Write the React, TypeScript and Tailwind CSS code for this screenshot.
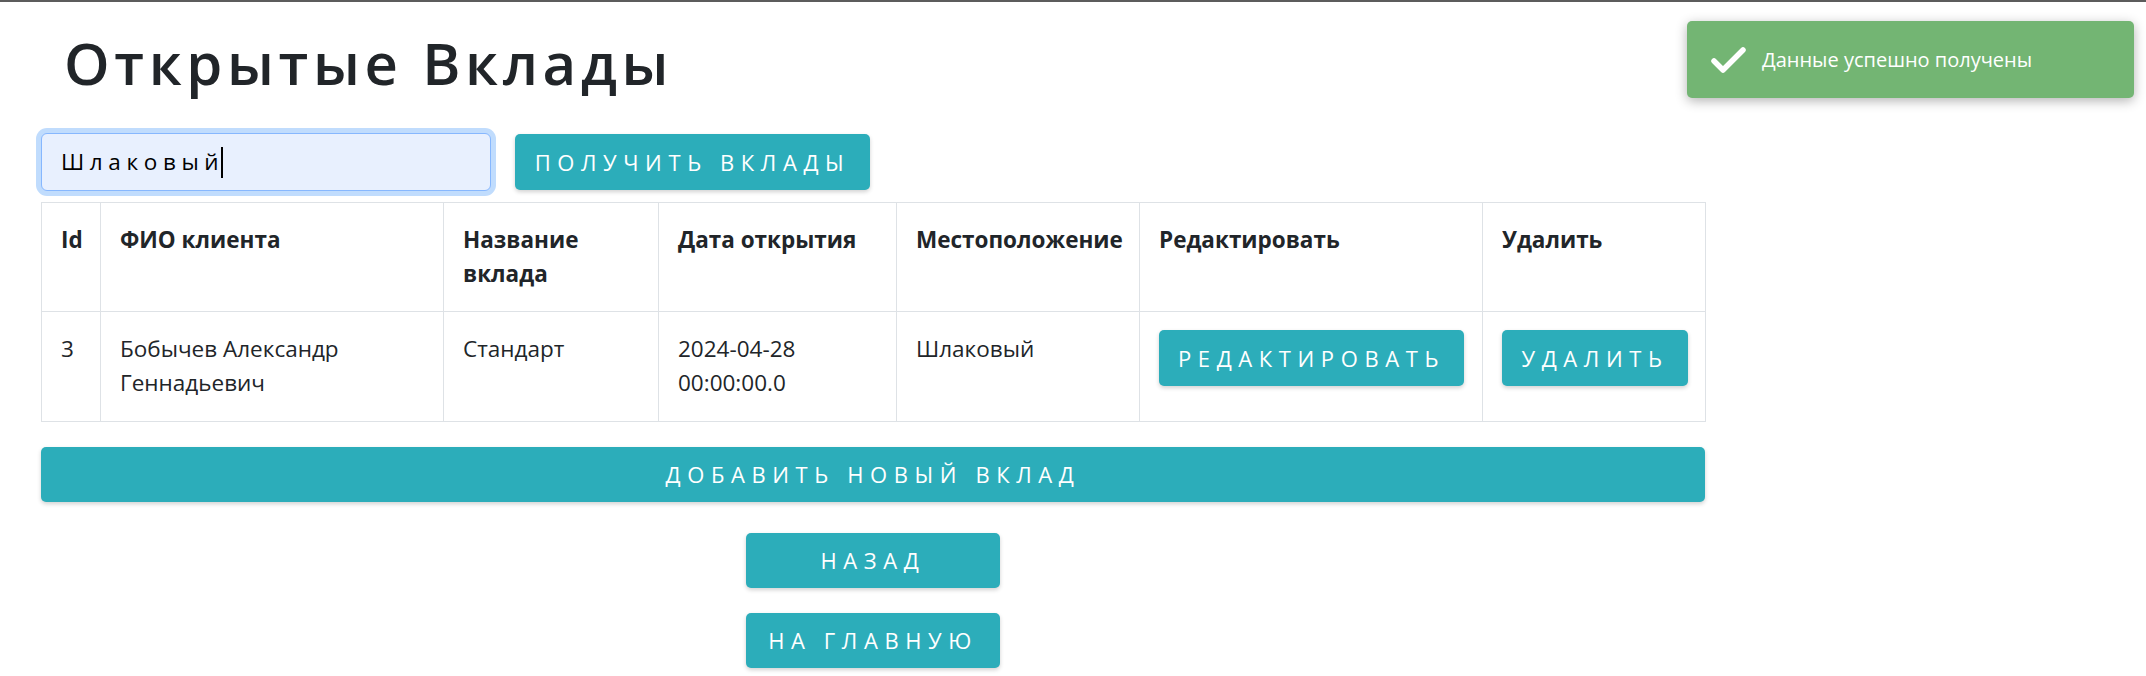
import React from "react";

const btn =
  "bg-[#2cadba] text-white uppercase rounded-[5px] shadow-[0_2px_4px_rgba(0,0,0,0.18)] flex items-center justify-center tracking-[0.3em] text-[22px]";

const th = "border border-[#dee2e6] px-[19px] pt-[20px] pb-[20px] font-bold";
const td = "border border-[#dee2e6] px-[19px] pt-[20px] pb-[21px]";

export default function App() {
  return (
    <div className="relative w-full min-h-[676px] bg-white text-[#212529] font-['Open_Sans',sans-serif]">
      <div className="h-[2px] bg-[#5c5c5c]" />
      <div className="px-[41px] w-[1746px]">
        <h1 className="mt-[26px] pl-[23px] text-[58px] leading-[70px] font-semibold tracking-[0.08em]">
          Открытые Вклады
        </h1>
        <div className="mt-[35px] flex items-start">
          <div className="w-[450px] h-[58px] rounded-[6px] border border-[#86b7fe] bg-[#e8f0fe] shadow-[0_0_0_5px_#c0dcfd] flex items-center pl-[19px] text-[22.5px] tracking-[0.25em] text-black">
            <span>Шлаковый</span>
            <span className="inline-block w-[2px] h-[31px] bg-black ml-[-3px]" />
          </div>
          <button className={`${btn} ml-[24px] w-[355px] h-[56px] mt-[1px]`}>
            Получить вклады
          </button>
        </div>
        <table className="mt-[11px] w-[1664px] table-fixed border-collapse text-[22.5px] leading-[34px]">
          <thead>
            <tr className="text-left align-top">
              <th className={`w-[59px] ${th}`}>Id</th>
              <th className={`w-[343px] ${th}`}>ФИО клиента</th>
              <th className={`w-[215px] ${th}`}>Название вклада</th>
              <th className={`w-[238px] ${th}`}>Дата открытия</th>
              <th className={`w-[243px] ${th}`}>Местоположение</th>
              <th className={`w-[343px] ${th}`}>Редактировать</th>
              <th className={`w-[223px] ${th}`}>Удалить</th>
            </tr>
          </thead>
          <tbody>
            <tr className="align-top">
              <td className={td}>3</td>
              <td className={td}>Бобычев Александр Геннадьевич</td>
              <td className={td}>Стандарт</td>
              <td className={td}>2024-04-28 00:00:00.0</td>
              <td className={td}>Шлаковый</td>
              <td className="border border-[#dee2e6] px-[19px] pt-[18px]">
                <button className={`${btn} w-[305px] h-[56px]`}>Редактировать</button>
              </td>
              <td className="border border-[#dee2e6] px-[19px] pt-[18px]">
                <button className={`${btn} w-[186px] h-[56px]`}>Удалить</button>
              </td>
            </tr>
          </tbody>
        </table>
        <button className={`${btn} mt-[25px] w-[1664px] h-[55px]`}>Добавить новый вклад</button>
        <div className="flex flex-col items-center w-[1664px]">
          <button className={`${btn} mt-[31px] w-[254px] h-[55px]`}>Назад</button>
          <button className={`${btn} mt-[25px] w-[254px] h-[55px]`}>На главную</button>
        </div>
      </div>
      <div className="absolute top-[21px] right-[12px] w-[447px] h-[77px] rounded-[5px] bg-[#73b573] shadow-[0_3px_12px_rgba(0,0,0,0.3)] flex items-center pl-[23px] text-white text-[20px]">
        <svg width="38" height="30" viewBox="0 0 38 30" className="shrink-0">
          <path d="M4 16 L13 25 L33 5" fill="none" stroke="white" strokeWidth="5.5" strokeLinecap="round" strokeLinejoin="round" />
        </svg>
        <span className="ml-[14px]">Данные успешно получены</span>
      </div>
    </div>
  );
}
